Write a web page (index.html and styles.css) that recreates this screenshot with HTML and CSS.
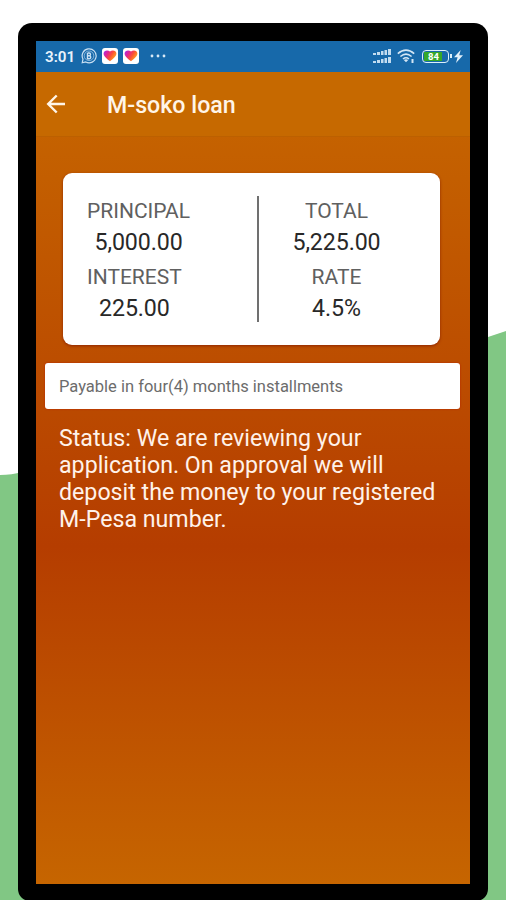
FILE: index.html
```html
<!DOCTYPE html>
<html lang="en">
<head>
<meta charset="utf-8">
<title>M-soko loan</title>
<link rel="stylesheet" href="styles.css">
</head>
<body>
<svg class="backdrop" viewBox="0 0 506 900" aria-hidden="true"><path d="M0 475Q12 475 22 472Q270 440 488 337L506 331V900H0Z" fill="#81c784"/></svg>
<main class="phone">
  <div class="screen">
    <div class="status-bar">
      <span class="clock">3:01</span>
      <svg class="chat" width="16" height="16" viewBox="0 0 16 16" fill="none" stroke="#c9e0f3"><path d="M1.2 14.8L2 11.2A7 7 0 1 1 4.8 14Z" stroke-width="1.2"/><circle cx="8" cy="7.8" r="4.8" stroke-width=".6"/><path d="M6.5 5v5.7H8.3a1.4 1.4 0 0 0 0-2.9H6.5M6.5 5h1.6a1.4 1.4 0 0 1 0 2.8" stroke-width="1.4"/></svg>
      <svg class="heart" width="16" height="16" viewBox="0 0 16 16"><defs><linearGradient id="love" x1="0" y1=".1" x2="1" y2=".65"><stop offset="0" stop-color="#a72bea"/><stop offset=".32" stop-color="#e5268b"/><stop offset=".6" stop-color="#fb5135"/><stop offset="1" stop-color="#ffb21c"/></linearGradient></defs><rect width="16" height="16" rx="3" fill="#fff"/><path d="M8 13.2C5.6 11.4 1.6 8.6 1.6 5.5C1.6 2.2 5.8 1.8 8 3.4C10.2 1.8 14.4 2.2 14.4 5.5C14.4 8.6 10.4 11.4 8 13.2Z" fill="url(#love)"/></svg>
      <svg class="heart" width="16" height="16" viewBox="0 0 16 16"><rect width="16" height="16" rx="3" fill="#fff"/><path d="M8 13.2C5.6 11.4 1.6 8.6 1.6 5.5C1.6 2.2 5.8 1.8 8 3.4C10.2 1.8 14.4 2.2 14.4 5.5C14.4 8.6 10.4 11.4 8 13.2Z" fill="url(#love)"/></svg>
      <svg class="more" width="16" height="4" viewBox="0 0 16 4" fill="#d8e9f6"><circle cx="2" cy="2" r="1.4"/><circle cx="8" cy="2" r="1.4"/><circle cx="14" cy="2" r="1.4"/></svg>
      <svg class="signal" width="18" height="15" viewBox="0 0 18 15" fill="#c2dcf0"><path d="M0 4h3v2H0zM4 3h3v3H4zM8 2h2.5v4H8zM11.5 1H14v5h-2.5zM15 0h3v6h-3zM0 12h3v2H0zM4 11h3v3H4zM8 10h2.5v4H8zM11.5 9H14v5h-2.5zM15 8h3v6h-3z"/></svg>
      <svg class="wifi" width="19" height="15" viewBox="0 0 19 15" fill="none" stroke="#d3e6f5" stroke-width="1.6"><path d="M.8 4.7Q9 -2.4 17.2 4.7M3.4 7.5Q9 2.7 14.6 7.5M6 10Q9 7.6 12 10"/><path d="M9 13.2L6.8 11Q9 9.4 11.2 11Z" fill="#d3e6f5" stroke="none"/><path d="M15.5 10v4" stroke-width="2"/></svg>
      <span class="battery"><span class="charge">84</span></span>
      <svg class="bolt" width="9" height="13" viewBox="0 0 9 13" fill="#e2f0fa"><path d="M6.7 0L0 7.2H3.6L2 13L9 5.3H5.2Z"/></svg>
    </div>
    <header class="app-bar">
      <svg width="20" height="20" viewBox="0 0 20 20" fill="none" stroke="#fff5e8" stroke-width="2.4"><path d="M19 10H2.5M10.7 1.5L2.2 10L10.7 18.5"/></svg>
      <h1>M-soko loan</h1>
    </header>
    <section class="summary">
      <div class="column left">
        <div class="item"><span class="label">PRINCIPAL</span><span class="value">5,000.00</span></div>
        <div class="item"><span class="label">INTEREST</span><span class="value">225.00</span></div>
      </div>
      <div class="divider"></div>
      <div class="column right">
        <div class="item"><span class="label">TOTAL</span><span class="value">5,225.00</span></div>
        <div class="item"><span class="label">RATE</span><span class="value">4.5%</span></div>
      </div>
    </section>
    <div class="terms">Payable in four(4) months installments</div>
    <p class="status">Status: We are reviewing your<br>application. On approval we will<br>deposit the money to your registered<br>M-Pesa number.</p>
  </div>
</main>
</body>
</html>
```
FILE: styles.css
```css
* { box-sizing: border-box; }
body { margin: 0; height: 900px; overflow: hidden; background: #fff; font-family: Roboto, "Liberation Sans", sans-serif; }
.backdrop { position: absolute; inset: 0; width: 506px; height: 900px; z-index: -1; }
.phone { width: 470px; height: 878px; margin: 23px 0 0 18px; padding: 18px; background: #000; border-radius: 14px 14px 12px 12px; }
.screen { width: 434px; height: 843px; background: linear-gradient(#c66900 0, #c66500 7%, #b53d00 60%, #c66500 100%); }
.status-bar { height: 31px; display: flex; align-items: center; padding: 0 7px 0 9px; background: #1769aa; }
.clock { width: 36px; font-size: 15.2px; font-weight: 600; color: #e8f3fc; }
.heart { margin-left: 5px; }
.chat, .heart, .more { position: relative; top: -.5px; }
.more { margin-left: 11px; }
.signal { margin-left: auto; }
.wifi { margin-left: 6px; }
.battery { position: relative; top: -.5px; width: 27px; height: 13px; margin-left: 6px; padding: 1px; border: 1.5px solid #dceffa; border-radius: 4px; }
.battery::after { content: ""; position: absolute; right: -4px; top: 3px; width: 2px; height: 4px; background: #dceffa; }
.charge { display: block; width: 18px; height: 9px; padding-left: 4px; background: #35a829; color: #fff; font-size: 9.5px; line-height: 9px; font-weight: 700; }
.bolt { margin-left: 5px; }
.app-bar { height: 65px; display: flex; align-items: center; padding-left: 10px; background: #c66900; border-bottom: 1px solid #bc6000; }
h1 { margin: 2px 0 0 41px; color: #fff5e8; font-size: 23.2px; line-height: 28px; font-weight: 500; }
.summary { display: flex; width: 377px; height: 172px; margin: 36px 0 0 27px; padding-top: 23px; background: #fff; border-radius: 9px; box-shadow: 0 1px 3px #8f2600; }
.column { display: flex; flex-direction: column; align-items: flex-start; }
.left { width: 194px; padding-left: 24px; }
.right { width: 156px; align-items: center; }
.item { display: flex; flex-direction: column; align-items: center; height: 65.5px; }
.label { height: 31px; line-height: 31px; font-size: 21px; color: #606060; }
.value { height: 30px; line-height: 30px; font-size: 23.2px; letter-spacing: -.1px; color: #282828; }
.divider { width: 1.5px; height: 126px; background: #707070; }
.terms { width: 415px; height: 46px; margin: 18px 0 0 9px; padding-left: 14px; line-height: 48px; background: #fff; border-radius: 3px; box-shadow: 0 0 2px #b51d00; font-size: 16.5px; color: #6c6c6c; }
.status { margin: 16px 0 0 23px; color: #fff2ea; font-size: 23.2px; line-height: 27px; white-space: nowrap; }
```
